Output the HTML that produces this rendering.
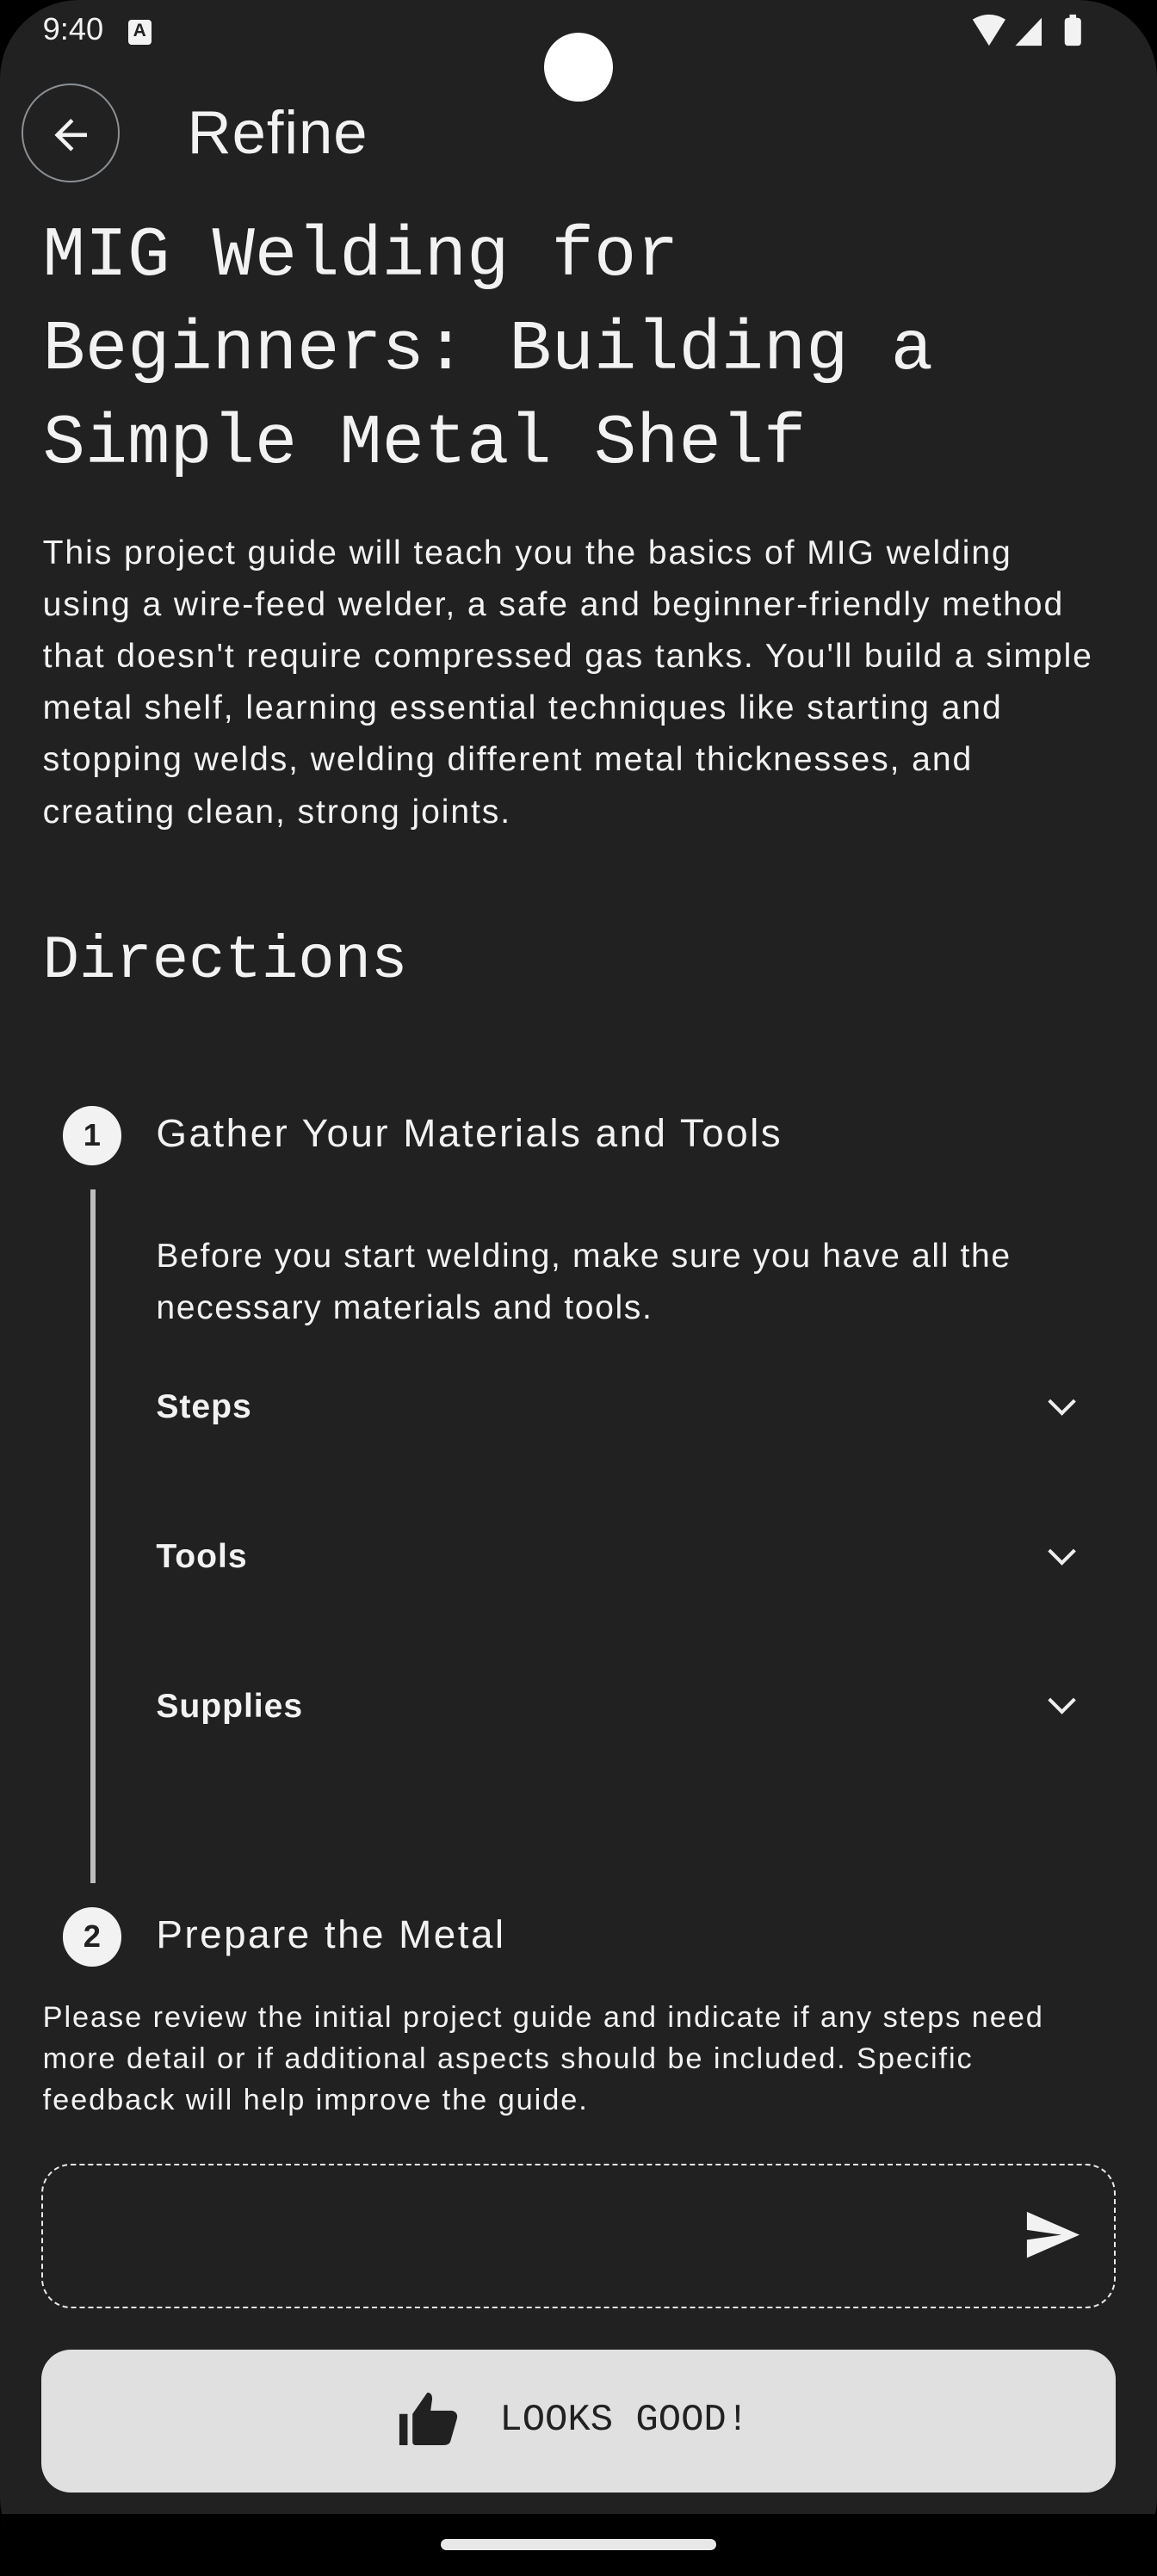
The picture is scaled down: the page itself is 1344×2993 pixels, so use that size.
<!DOCTYPE html>
<html><head><meta charset="utf-8"><style>
html,body{margin:0;padding:0;background:#000;}
body{width:1344px;height:2992px;overflow:hidden;}
#s{zoom:1.909091;width:704px;height:1568px;position:relative;background:#212121;border-radius:48px;overflow:hidden;font-family:"Liberation Sans",sans-serif;color:#f2f2f2;}
.a{position:absolute;}
.nw{white-space:nowrap;}
.mono{font-family:"Liberation Mono",monospace;}
.chev{position:absolute;left:640px;width:10px;height:10px;border-right:2.5px solid #eee;border-bottom:2.5px solid #eee;transform:rotate(45deg);}
.circ{position:absolute;left:38px;width:36px;height:36px;border-radius:50%;background:#f2f2f2;color:#212121;font-weight:bold;font-size:19px;text-align:center;line-height:36px;}
</style></head><body><div id="s">
<div class="a" style="left:26px;top:7px;font-size:19px;">9:40</div>
<div class="a" style="left:78px;top:12px;width:14px;height:15px;background:#f2f2f2;border-radius:2px;color:#212121;font-size:11px;font-weight:bold;text-align:center;line-height:14px;">A</div>
<div class="a" style="left:331px;top:20px;width:42px;height:42px;border-radius:50%;background:#fff;"></div>
<svg class="a" style="left:590px;top:8px" width="74" height="22" viewBox="0 0 74 22"><path d="M2 4 Q12 -2 22 4 L12 20Z" fill="#f2f2f2"/><path d="M28 20 L44 3 L44 20Z" fill="#f2f2f2"/><rect x="58" y="3" width="10" height="17" rx="2" fill="#f2f2f2"/><rect x="61" y="1" width="4" height="3" fill="#f2f2f2"/></svg>
<div class="a" style="left:13px;top:51px;width:60px;height:60px;border-radius:50%;border:1.5px solid #8a8f94;box-sizing:border-box;"></div>
<svg class="a" style="left:31px;top:69px" width="26" height="26" viewBox="0 0 26 26"><path d="M22 13H5M13 4L4 13L13 22" stroke="#f2f2f2" stroke-width="2.4" fill="none"/></svg>
<div class="a" style="left:114px;top:59px;font-size:37px;letter-spacing:0.5px;">Refine</div>
<div class="a mono" style="left:26px;top:128px;font-size:43px;line-height:57px;width:670px;">MIG Welding for Beginners: Building a Simple Metal Shelf</div>
<div class="a nw" style="left:26px;top:321px;font-size:20.5px;line-height:31.5px;letter-spacing:1px;">This project guide will teach you the basics of MIG welding<br>using a wire-feed welder, a safe and beginner-friendly method<br>that doesn't require compressed gas tanks. You'll build a simple<br>metal shelf, learning essential techniques like starting and<br>stopping welds, welding different metal thicknesses, and<br>creating clean, strong joints.</div>
<div class="a mono" style="left:26px;top:564px;font-size:37px;">Directions</div>
<div class="circ" style="top:673px;">1</div>
<div class="a" style="left:95px;top:676px;font-size:24px;letter-spacing:1.3px;">Gather Your Materials and Tools</div>
<div class="a" style="left:55px;top:724px;width:3px;height:422px;background:#bdbdbd;"></div>
<div class="a nw" style="left:95px;top:749px;font-size:20.5px;line-height:31.5px;letter-spacing:0.85px;">Before you start welding, make sure you have all the<br>necessary materials and tools.</div>
<div class="a" style="left:95px;top:845px;font-size:20.5px;font-weight:bold;letter-spacing:0.5px;">Steps</div><div class="chev" style="top:847px"></div>
<div class="a" style="left:95px;top:936px;font-size:20.5px;font-weight:bold;letter-spacing:0.5px;">Tools</div><div class="chev" style="top:938px"></div>
<div class="a" style="left:95px;top:1027px;font-size:20.5px;font-weight:bold;letter-spacing:0.5px;">Supplies</div><div class="chev" style="top:1029px"></div>
<div class="circ" style="top:1161px;">2</div>
<div class="a" style="left:95px;top:1164px;font-size:24px;letter-spacing:1.3px;">Prepare the Metal</div>
<div class="a nw" style="left:26px;top:1216px;font-size:18px;line-height:25px;letter-spacing:1px;">Please review the initial project guide and indicate if any steps need<br>more detail or if additional aspects should be included. Specific<br>feedback will help improve the guide.</div>
<div class="a" style="left:25px;top:1317px;width:654px;height:88px;border:1.5px dashed #e8e8e8;border-radius:18px;box-sizing:border-box;"></div>
<svg class="a" style="left:624px;top:1345px" width="34" height="30" viewBox="0 0 34 30"><path d="M1 1L33 15L1 29L1 18L22 15L1 12Z" fill="#f2f2f2"/></svg>
<div class="a" style="left:25px;top:1430px;width:654px;height:87px;background:#e0e0e0;border-radius:18px;"></div>
<svg class="a" style="left:242px;top:1455px" width="38" height="34" viewBox="0 0 38 34"><rect x="1" y="14" width="5" height="19" fill="#212121"/><path d="M9 14 L18 1 Q21 1 21 5 L20 12 L33 12 Q37 13 36 17 L32 31 Q31 33 28 33 L11 33 Q9 33 9 31Z" fill="#212121"/></svg>
<div class="a mono" style="left:304px;top:1460px;font-size:23px;color:#212121;">LOOKS GOOD!</div>
<div class="a" style="left:0;top:1530px;width:704px;height:38px;background:#000;"></div>
<div class="a" style="left:268px;top:1545px;width:168px;height:7px;border-radius:4px;background:#e8e8e8;"></div>
</div></body></html>
